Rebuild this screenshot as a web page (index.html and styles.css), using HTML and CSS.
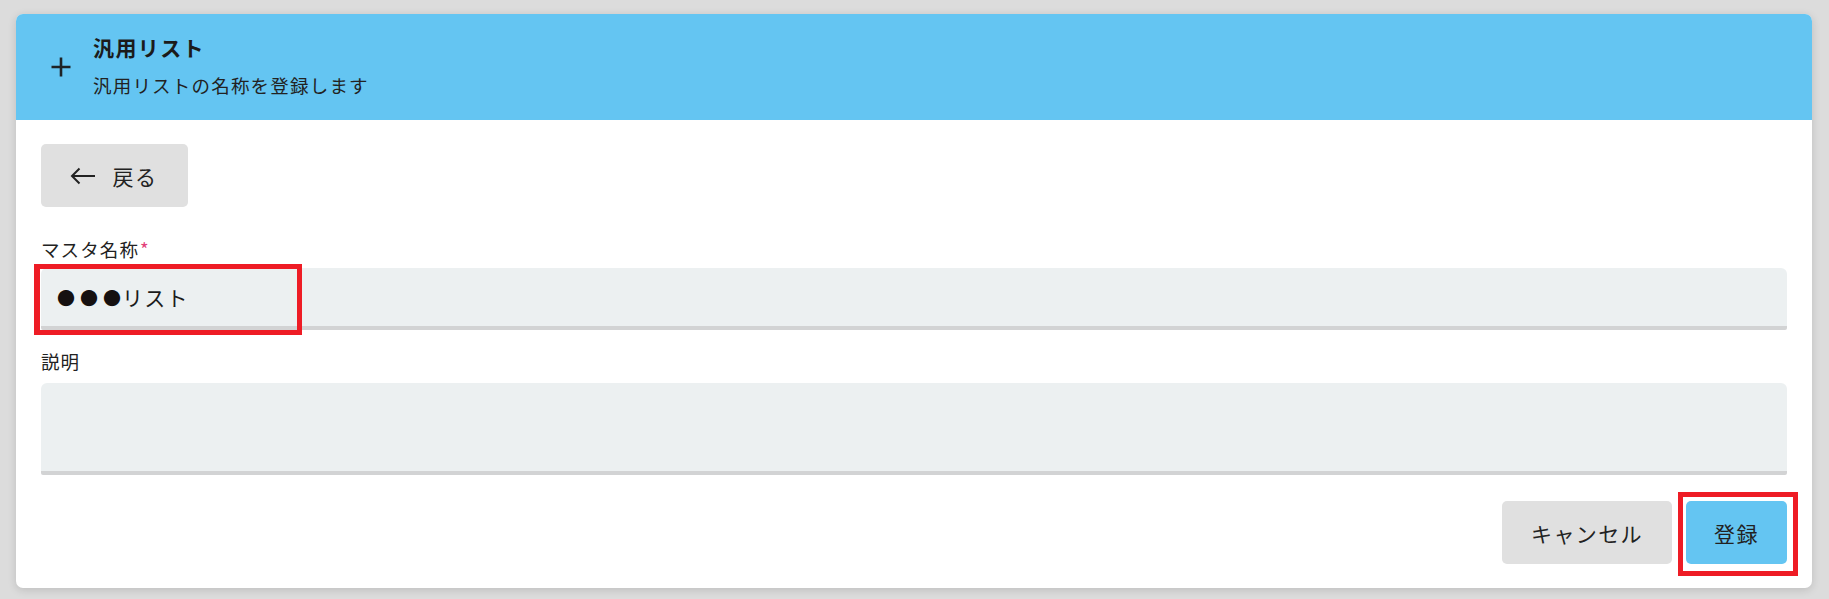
FILE: index.html
```html
<!DOCTYPE html>
<html lang="ja">
<head>
<meta charset="utf-8">
<title>汎用リスト</title>
<link rel="stylesheet" href="styles.css">
</head>
<body>
<div class="card">
  <div class="card-header">
    <svg class="plus-icon" width="20" height="20" viewBox="0 0 20 20" aria-hidden="true">
      <path d="M10 0.5V19.5M0.5 10H19.5" stroke="#1e2326" stroke-width="2.6" fill="none"/>
    </svg>
    <div class="header-text">
      <div class="header-title">汎用リスト</div>
      <div class="header-sub">汎用リストの名称を登録します</div>
    </div>
  </div>
  <div class="card-body">
    <div class="back-row">
      <button class="btn btn-grey btn-back">
        <svg width="26" height="18" viewBox="0 0 26 18" aria-hidden="true">
          <path d="M25 9H2M9.5 1.5L2 9L9.5 16.5" stroke="#222" stroke-width="2" fill="none"/>
        </svg>
        <span>戻る</span>
      </button>
    </div>
    <div class="field field-first">
      <div class="label">マスタ名称<span class="req">*</span></div>
      <div class="input-wrap">
        <div class="input"><span class="dots">●●●</span>リスト</div>
        <div class="mark mark-input"></div>
      </div>
    </div>
    <div class="field field-second">
      <div class="label">説明</div>
      <div class="textarea"></div>
    </div>
    <div class="actions">
      <button class="btn btn-grey btn-cancel">キャンセル</button>
      <div class="submit-wrap">
        <button class="btn btn-blue btn-submit">登録</button>
        <div class="mark mark-submit"></div>
      </div>
    </div>
  </div>
</div>
</body>
</html>
```

FILE: styles.css
```css
* { box-sizing: border-box; }
html, body { margin: 0; height: 100%; }
body {
  background: #dcdcdc;
  padding: 14px 17px 11px 16px;
  font-family: "Noto Sans CJK JP", "Noto Sans", sans-serif;
  color: #222;
}
.card {
  background: #fff;
  border-radius: 7px;
  box-shadow: 0 2px 8px rgba(0,0,0,0.14);
  overflow: hidden;
  height: 574px;
}
.card-header {
  height: 106px;
  background: #64c5f2;
  display: flex;
  align-items: center;
  padding-left: 35px;
}
.plus-icon { flex: none; margin-right: 22px; margin-top: 0; }
.header-text { display: flex; flex-direction: column; }
.header-title {
  font-size: 21px;
  font-weight: 700;
  line-height: 32px;
  letter-spacing: 1.4px;
  color: #1b1b1b;
  margin-top: -2px;
  margin-bottom: 6px;
}
.header-sub {
  font-size: 18.5px;
  line-height: 32px;
  letter-spacing: 1.2px;
  color: #222;
}
.card-body {
  padding: 24px 25px 0 25px;
}
.back-row { display: flex; }
.btn {
  border: none;
  border-radius: 5px;
  font-family: inherit;
  font-size: 21px;
  letter-spacing: 1.4px;
  color: #222;
  display: flex;
  align-items: center;
  justify-content: center;
  padding: 0;
}
.btn-grey { background: #e0e0e0; }
.btn-blue { background: #64c5f2; }
.btn-back {
  width: 147px;
  height: 63px;
  gap: 17px;
  padding-right: 2px;
}
.btn-back svg { flex: none; }
.field-first { margin-top: 27px; }
.field-second { margin-top: 16px; }
.label {
  font-size: 18.5px;
  line-height: 30px;
  letter-spacing: 1.1px;
  margin-bottom: 4px;
  color: #222;
}
.field-second .label { margin-bottom: 7px; }
.req { color: #e2407a; margin-left: 1px; }
.input-wrap { position: relative; }
.input {
  height: 62px;
  background: #ecf0f1;
  border-radius: 6px 6px 2px 2px;
  border-bottom: 4px solid #d2d3d4;
  font-size: 21px;
  letter-spacing: 1.2px;
  line-height: 58px;
  padding-left: 16px;
  color: #1b1b1b;
}
.dots {
  font-size: 18px;
  letter-spacing: 5px;
  margin-right: -4px;
  color: #151010;
  vertical-align: 1px;
}
.textarea {
  height: 92px;
  background: #ecf0f1;
  border-radius: 6px 6px 2px 2px;
  border-bottom: 4px solid #d2d3d4;
}
.mark {
  position: absolute;
  border: 5px solid #ee1c25;
  pointer-events: none;
}
.mark-input {
  left: -7px;
  top: -4px;
  width: 268px;
  height: 71px;
  border-left-width: 6px;
}
.actions {
  display: flex;
  justify-content: flex-end;
  gap: 14px;
  margin-top: 26px;
  padding-right: 0;
}
.btn-cancel { width: 170px; height: 63px; }
.submit-wrap { position: relative; }
.btn-submit { width: 101px; height: 63px; }
.mark-submit {
  left: -8px;
  top: -9px;
  width: 120px;
  height: 84px;
}
```
